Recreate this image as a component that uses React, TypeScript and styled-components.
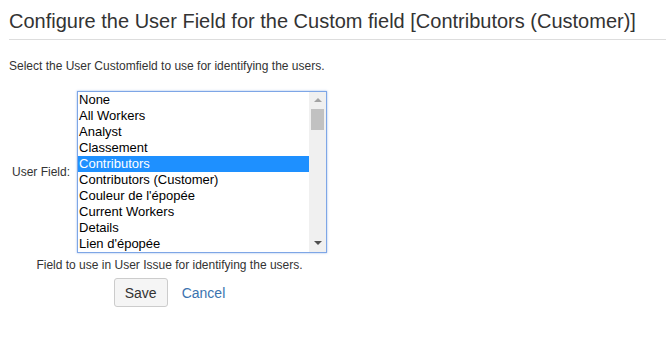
import React from "react";
import styled, { createGlobalStyle } from "styled-components";

const GlobalStyle = createGlobalStyle`
  html, body {
    margin: 0;
    padding: 0;
    background: #fff;
  }
  body {
    font-family: Arial, "Liberation Sans", sans-serif;
    color: #333;
  }
`;

const Page = styled.div`
  padding: 6px 0 0 9px;
`;

const Heading = styled.h2`
  margin: 0;
  padding-bottom: 3px;
  font-size: 20px;
  font-weight: normal;
  line-height: 30px;
  color: #333;
  border-bottom: 1px solid #ddd;
`;

const Intro = styled.p`
  margin: 18px 0 0;
  font-size: 12px;
  line-height: 16px;
`;

const Form = styled.div`
  display: inline-grid;
  grid-template-columns: auto 250px;
  column-gap: 7px;
  align-items: center;
  margin-top: 17px;
  padding-left: 3px;
`;

const Label = styled.label`
  font-size: 12px;
  line-height: 16px;
  color: #333;
`;

const ListBox = styled.div`
  display: flex;
  height: 160px;
  border: 1px solid #7ea6e6;
  box-shadow: 0 0 2px rgba(90, 140, 220, 0.6);
  background: #fff;
  overflow: hidden;
`;

const Options = styled.ul`
  flex: 1;
  margin: 0;
  padding: 0;
  list-style: none;
`;

const Option = styled.li<{ $selected?: boolean }>`
  height: 16px;
  padding-left: 1px;
  font-size: 13px;
  line-height: 16px;
  white-space: nowrap;
  color: ${(p) => (p.$selected ? "#fff" : "#000")};
  background: ${(p) => (p.$selected ? "#1e90ff" : "transparent")};
`;

const ScrollBar = styled.div`
  display: flex;
  flex-direction: column;
  align-items: center;
  width: 17px;
  background: #f0f0f0;
`;

const Arrow = styled.div<{ $down?: boolean }>`
  width: 0;
  height: 0;
  margin: ${(p) => (p.$down ? "auto 0 7px" : "6px 0 0")};
  border-left: 4px solid transparent;
  border-right: 4px solid transparent;
  ${(p) =>
    p.$down
      ? "border-top: 4px solid #505050;"
      : "border-bottom: 4px solid #a3a3a3;"}
`;

const Thumb = styled.div`
  width: 13px;
  height: 21px;
  margin-top: 7px;
  background: #c1c1c1;
`;

const Help = styled.div`
  grid-column: 1 / -1;
  margin-top: 4px;
  text-align: center;
  font-size: 12px;
  line-height: 16px;
  color: #333;
`;

const Buttons = styled.div`
  grid-column: 1 / -1;
  display: flex;
  justify-content: center;
  align-items: center;
  gap: 14px;
  margin-top: 5px;
`;

const Button = styled.button`
  height: 29px;
  padding: 0 10px;
  font-family: Arial, "Liberation Sans", sans-serif;
  font-size: 14px;
  color: #333;
  background: #f5f5f5;
  border: 1px solid #ccc;
  border-radius: 3px;
`;

const Link = styled.a`
  font-size: 14px;
  color: #3b73af;
  text-decoration: none;
`;

const fields = [
  "None",
  "All Workers",
  "Analyst",
  "Classement",
  "Contributors",
  "Contributors (Customer)",
  "Couleur de l'épopée",
  "Current Workers",
  "Details",
  "Lien d'épopée",
];

const App = (): JSX.Element => {
  return (
    <Page>
      <GlobalStyle />
      <Heading>Configure the User Field for the Custom field [Contributors (Customer)]</Heading>
      <Intro>Select the User Customfield to use for identifying the users.</Intro>
      <Form>
        <Label>User Field:</Label>
        <ListBox>
          <Options>
            {fields.map((f) => (
              <Option key={f} $selected={f === "Contributors"}>
                {f}
              </Option>
            ))}
          </Options>
          <ScrollBar>
            <Arrow />
            <Thumb />
            <Arrow $down />
          </ScrollBar>
        </ListBox>
        <Help>Field to use in User Issue for identifying the users.</Help>
        <Buttons>
          <Button>Save</Button>
          <Link href="#">Cancel</Link>
        </Buttons>
      </Form>
    </Page>
  );
};

export default App;
